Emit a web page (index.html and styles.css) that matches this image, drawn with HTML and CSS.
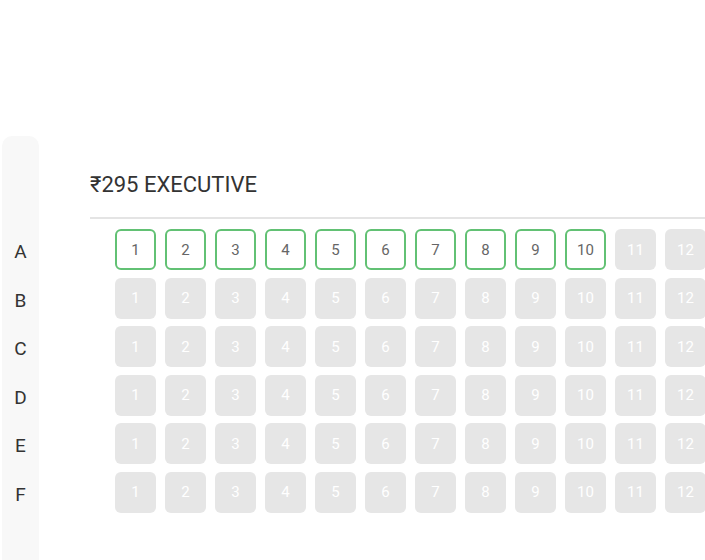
FILE: index.html
```html
<!DOCTYPE html>
<html lang="en">
<head>
    <meta charset="UTF-8">
    <title>Select Seats</title>
    <link rel="stylesheet" href="styles.css">
</head>
<body>
    <div class="seat-map">
        <div class="row-labels">
            <div class="row-label">A</div>
            <div class="row-label">B</div>
            <div class="row-label">C</div>
            <div class="row-label">D</div>
            <div class="row-label">E</div>
            <div class="row-label">F</div>
        </div>

        <div class="seat-section">
            <h3 class="section-title">₹295 EXECUTIVE</h3>

            <div class="seat-rows">
                <div class="seat-row">
                    <button class="seat available">1</button>
                    <button class="seat available">2</button>
                    <button class="seat available">3</button>
                    <button class="seat available">4</button>
                    <button class="seat available">5</button>
                    <button class="seat available">6</button>
                    <button class="seat available">7</button>
                    <button class="seat available">8</button>
                    <button class="seat available">9</button>
                    <button class="seat available">10</button>
                    <button class="seat">11</button>
                    <button class="seat">12</button>
                </div>
                <div class="seat-row">
                    <button class="seat">1</button>
                    <button class="seat">2</button>
                    <button class="seat">3</button>
                    <button class="seat">4</button>
                    <button class="seat">5</button>
                    <button class="seat">6</button>
                    <button class="seat">7</button>
                    <button class="seat">8</button>
                    <button class="seat">9</button>
                    <button class="seat">10</button>
                    <button class="seat">11</button>
                    <button class="seat">12</button>
                </div>
                <div class="seat-row">
                    <button class="seat">1</button>
                    <button class="seat">2</button>
                    <button class="seat">3</button>
                    <button class="seat">4</button>
                    <button class="seat">5</button>
                    <button class="seat">6</button>
                    <button class="seat">7</button>
                    <button class="seat">8</button>
                    <button class="seat">9</button>
                    <button class="seat">10</button>
                    <button class="seat">11</button>
                    <button class="seat">12</button>
                </div>
                <div class="seat-row">
                    <button class="seat">1</button>
                    <button class="seat">2</button>
                    <button class="seat">3</button>
                    <button class="seat">4</button>
                    <button class="seat">5</button>
                    <button class="seat">6</button>
                    <button class="seat">7</button>
                    <button class="seat">8</button>
                    <button class="seat">9</button>
                    <button class="seat">10</button>
                    <button class="seat">11</button>
                    <button class="seat">12</button>
                </div>
                <div class="seat-row">
                    <button class="seat">1</button>
                    <button class="seat">2</button>
                    <button class="seat">3</button>
                    <button class="seat">4</button>
                    <button class="seat">5</button>
                    <button class="seat">6</button>
                    <button class="seat">7</button>
                    <button class="seat">8</button>
                    <button class="seat">9</button>
                    <button class="seat">10</button>
                    <button class="seat">11</button>
                    <button class="seat">12</button>
                </div>
                <div class="seat-row">
                    <button class="seat">1</button>
                    <button class="seat">2</button>
                    <button class="seat">3</button>
                    <button class="seat">4</button>
                    <button class="seat">5</button>
                    <button class="seat">6</button>
                    <button class="seat">7</button>
                    <button class="seat">8</button>
                    <button class="seat">9</button>
                    <button class="seat">10</button>
                    <button class="seat">11</button>
                    <button class="seat">12</button>
                </div>
            </div>
        </div>
    </div>
</body>
</html>
```

FILE: styles.css
```css
:root {
    --text-color: #333333;
    --seat-available: #62c174;
    --seat-sold: #e6e6e6;
    --label-background: #f8f8f8;
    --divider-color: #e4e4e4;
}

* {
    margin: 0;
    padding: 0;
    box-sizing: border-box;
}

body {
    font-family: Roboto, "Liberation Sans", sans-serif;
    background-color: #ffffff;
    color: var(--text-color);
    overflow: hidden;
    height: 560px;
}

.seat-map {
    display: flex;
    margin-top: 136px;
}

.row-labels {
    flex: 0 0 37px;
    margin-left: 2px;
    min-height: 424px;
    padding-top: 93px;
    background-color: var(--label-background);
    border-radius: 10px 10px 0 0;
}

.row-label {
    height: 48.6px;
    line-height: 46px;
    text-align: center;
    font-size: 19px;
}

.seat-section {
    flex: 1;
    min-width: 0;
    margin-left: 51px;
    padding-top: 36px;
}

.section-title {
    font-size: 22px;
    font-weight: 400;
    line-height: 25px;
    padding-bottom: 20px;
    border-bottom: 2px solid var(--divider-color);
}

.seat-rows {
    padding: 10px 0 0 25px;
}

.seat-row {
    display: flex;
    gap: 9px;
    margin-bottom: 7.6px;
}

.seat {
    flex: 0 0 41px;
    height: 41px;
    border: none;
    border-radius: 6px;
    background-color: var(--seat-sold);
    color: #ffffff;
    font-family: inherit;
    font-size: 15px;
    display: flex;
    align-items: center;
    justify-content: center;
    cursor: default;
}

.seat.available {
    background-color: #ffffff;
    border: 2px solid var(--seat-available);
    color: #666666;
    cursor: pointer;
}
```
